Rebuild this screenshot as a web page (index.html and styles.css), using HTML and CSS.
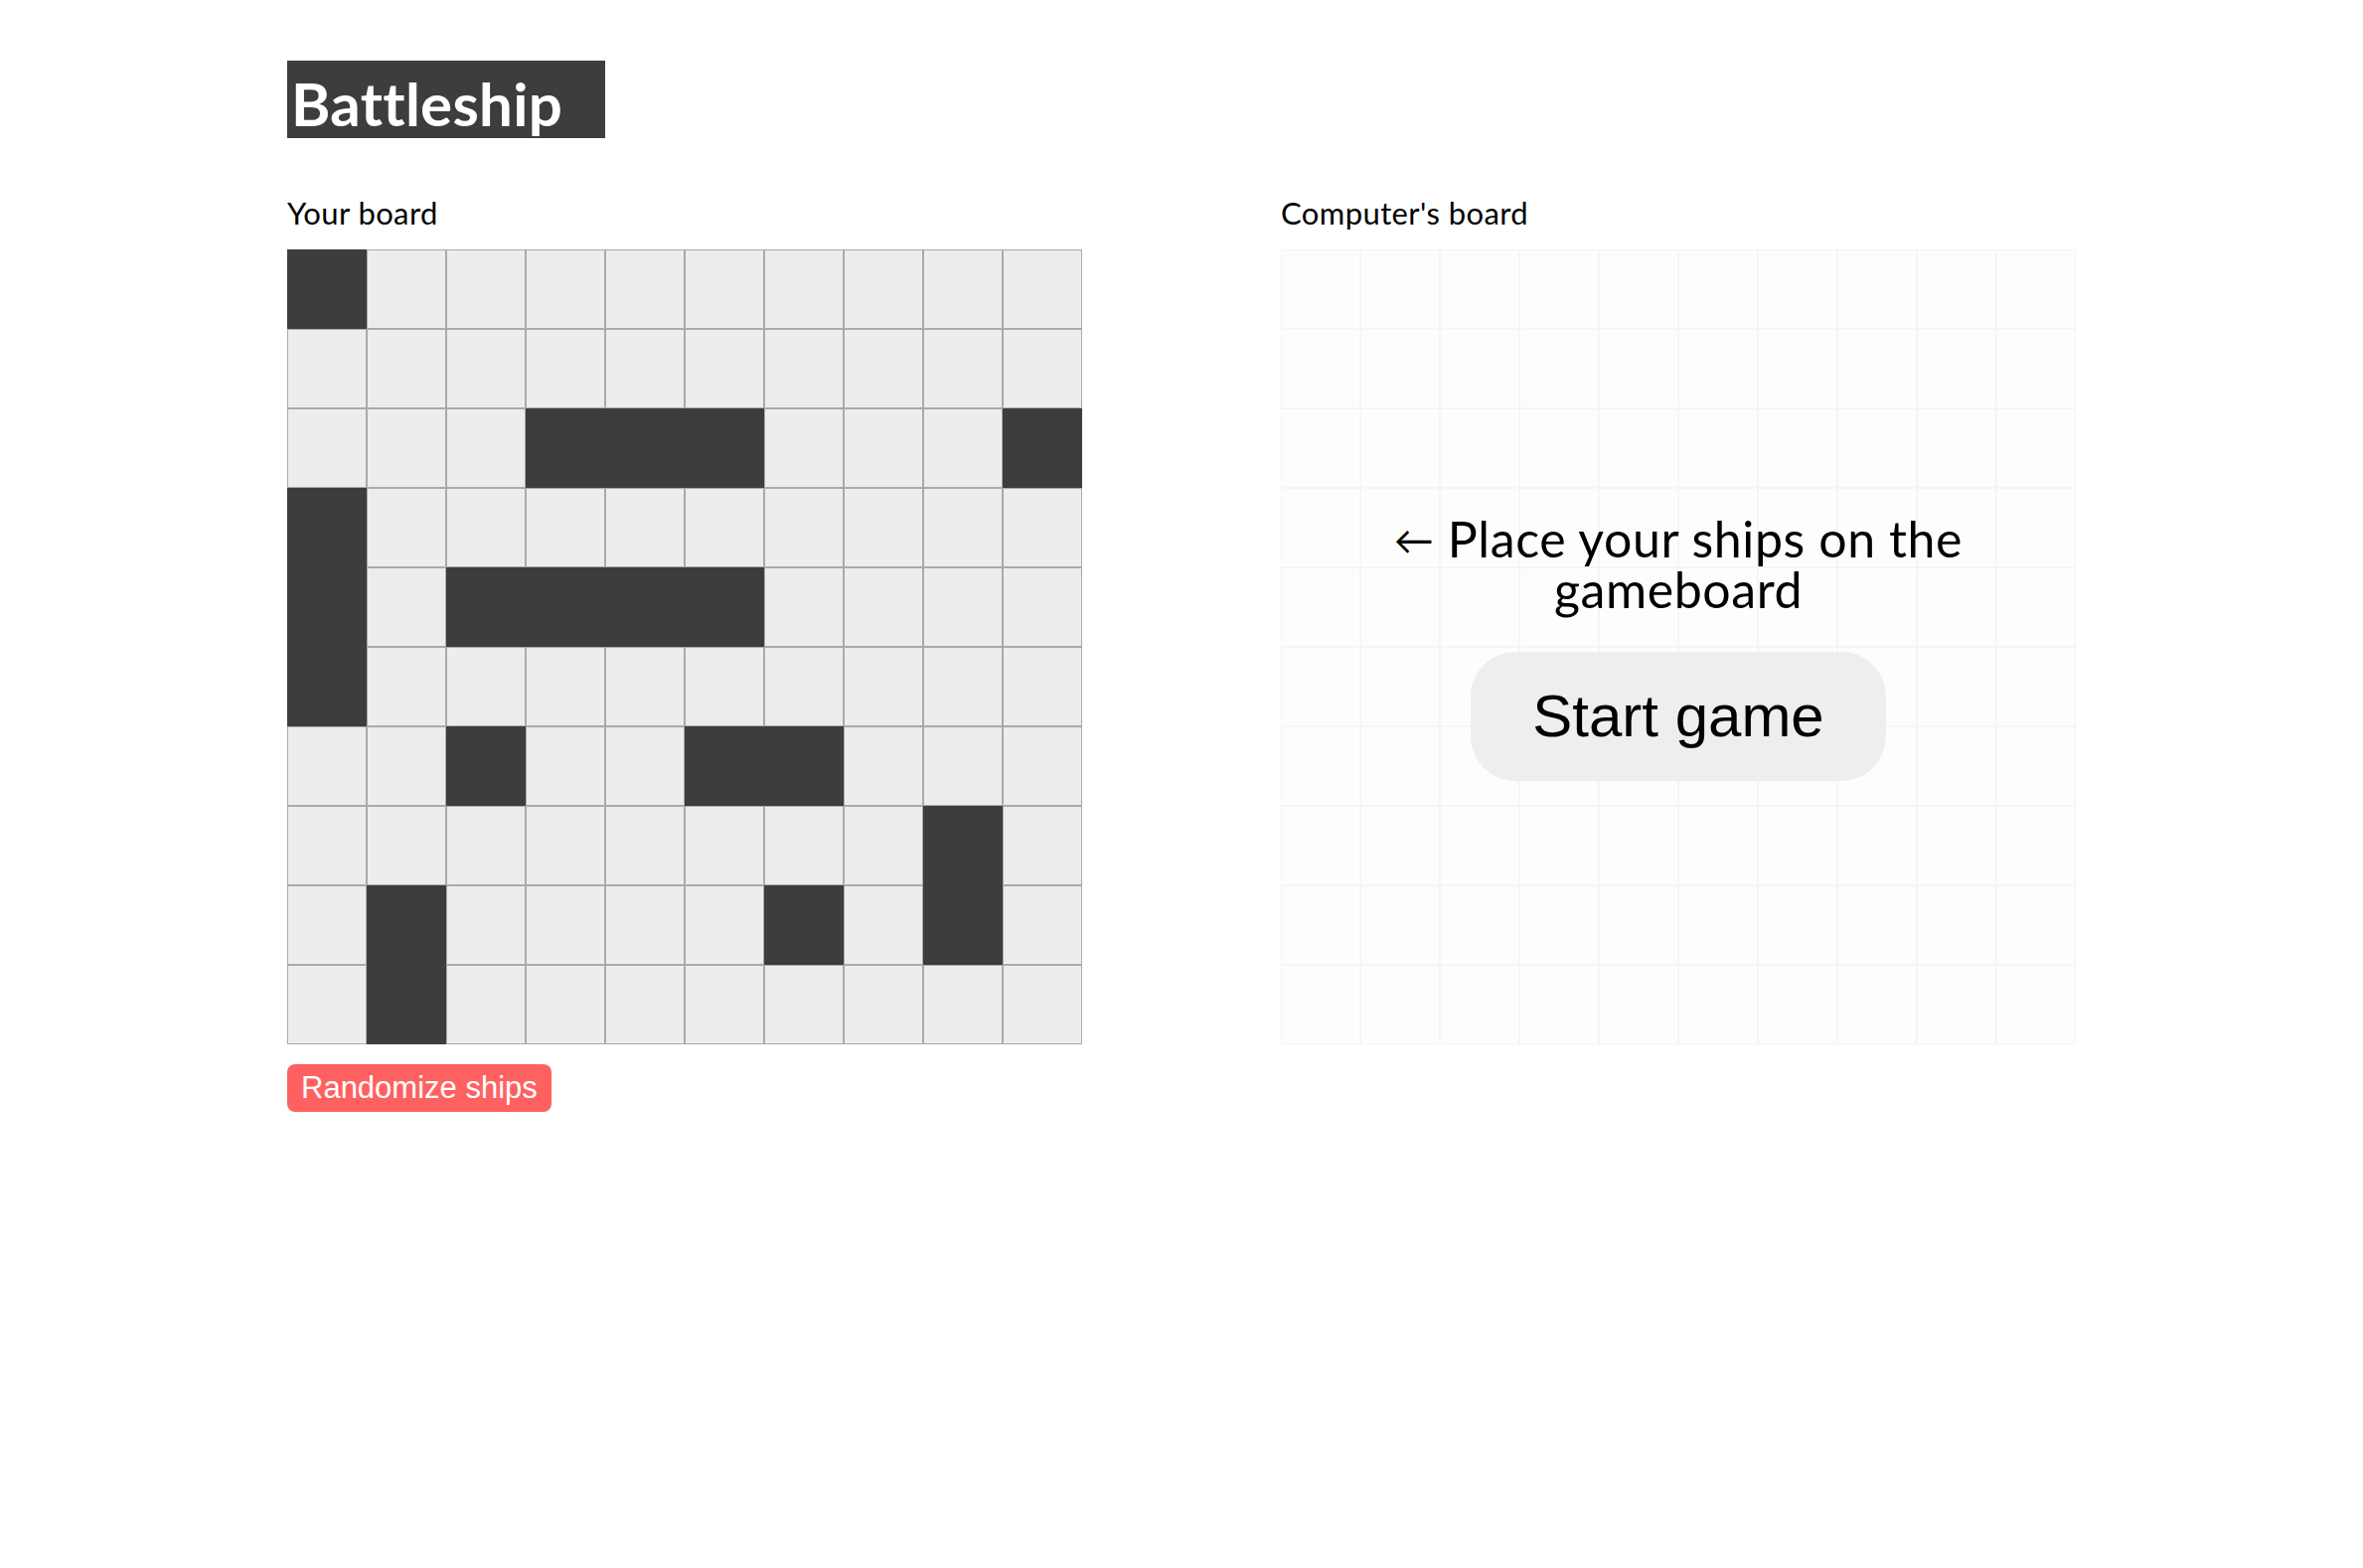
FILE: index.html
```html
<!DOCTYPE html>
<html lang="en">
<head>
<meta charset="utf-8">
<title>Battleship</title>
<link rel="stylesheet" href="styles.css">
</head>
<body>
<main class="page">
  <h1 class="title">Battleship</h1>
  <section class="boards">
    <div class="board-col">
      <h2 class="label">Your board</h2>
      <div class="grid">
        <div class="cell ship"></div><div class="cell"></div><div class="cell"></div><div class="cell"></div><div class="cell"></div><div class="cell"></div><div class="cell"></div><div class="cell"></div><div class="cell"></div><div class="cell"></div>
        <div class="cell"></div><div class="cell"></div><div class="cell"></div><div class="cell"></div><div class="cell"></div><div class="cell"></div><div class="cell"></div><div class="cell"></div><div class="cell"></div><div class="cell"></div>
        <div class="cell"></div><div class="cell"></div><div class="cell"></div><div class="cell ship"></div><div class="cell ship"></div><div class="cell ship"></div><div class="cell"></div><div class="cell"></div><div class="cell"></div><div class="cell ship"></div>
        <div class="cell ship"></div><div class="cell"></div><div class="cell"></div><div class="cell"></div><div class="cell"></div><div class="cell"></div><div class="cell"></div><div class="cell"></div><div class="cell"></div><div class="cell"></div>
        <div class="cell ship"></div><div class="cell"></div><div class="cell ship"></div><div class="cell ship"></div><div class="cell ship"></div><div class="cell ship"></div><div class="cell"></div><div class="cell"></div><div class="cell"></div><div class="cell"></div>
        <div class="cell ship"></div><div class="cell"></div><div class="cell"></div><div class="cell"></div><div class="cell"></div><div class="cell"></div><div class="cell"></div><div class="cell"></div><div class="cell"></div><div class="cell"></div>
        <div class="cell"></div><div class="cell"></div><div class="cell ship"></div><div class="cell"></div><div class="cell"></div><div class="cell ship"></div><div class="cell ship"></div><div class="cell"></div><div class="cell"></div><div class="cell"></div>
        <div class="cell"></div><div class="cell"></div><div class="cell"></div><div class="cell"></div><div class="cell"></div><div class="cell"></div><div class="cell"></div><div class="cell"></div><div class="cell ship"></div><div class="cell"></div>
        <div class="cell"></div><div class="cell ship"></div><div class="cell"></div><div class="cell"></div><div class="cell"></div><div class="cell"></div><div class="cell ship"></div><div class="cell"></div><div class="cell ship"></div><div class="cell"></div>
        <div class="cell"></div><div class="cell ship"></div><div class="cell"></div><div class="cell"></div><div class="cell"></div><div class="cell"></div><div class="cell"></div><div class="cell"></div><div class="cell"></div><div class="cell"></div>
      </div>
      <button class="randomize" type="button">Randomize ships</button>
    </div>
    <div class="board-col">
      <h2 class="label">Computer's board</h2>
      <div class="board-wrap">
        <div class="grid enemy">
          <div class="cell"></div><div class="cell"></div><div class="cell"></div><div class="cell"></div><div class="cell"></div><div class="cell"></div><div class="cell"></div><div class="cell"></div><div class="cell"></div><div class="cell"></div>
          <div class="cell"></div><div class="cell"></div><div class="cell"></div><div class="cell"></div><div class="cell"></div><div class="cell"></div><div class="cell"></div><div class="cell"></div><div class="cell"></div><div class="cell"></div>
          <div class="cell"></div><div class="cell"></div><div class="cell"></div><div class="cell"></div><div class="cell"></div><div class="cell"></div><div class="cell"></div><div class="cell"></div><div class="cell"></div><div class="cell"></div>
          <div class="cell"></div><div class="cell"></div><div class="cell"></div><div class="cell"></div><div class="cell"></div><div class="cell"></div><div class="cell"></div><div class="cell"></div><div class="cell"></div><div class="cell"></div>
          <div class="cell"></div><div class="cell"></div><div class="cell"></div><div class="cell"></div><div class="cell"></div><div class="cell"></div><div class="cell"></div><div class="cell"></div><div class="cell"></div><div class="cell"></div>
          <div class="cell"></div><div class="cell"></div><div class="cell"></div><div class="cell"></div><div class="cell"></div><div class="cell"></div><div class="cell"></div><div class="cell"></div><div class="cell"></div><div class="cell"></div>
          <div class="cell"></div><div class="cell"></div><div class="cell"></div><div class="cell"></div><div class="cell"></div><div class="cell"></div><div class="cell"></div><div class="cell"></div><div class="cell"></div><div class="cell"></div>
          <div class="cell"></div><div class="cell"></div><div class="cell"></div><div class="cell"></div><div class="cell"></div><div class="cell"></div><div class="cell"></div><div class="cell"></div><div class="cell"></div><div class="cell"></div>
          <div class="cell"></div><div class="cell"></div><div class="cell"></div><div class="cell"></div><div class="cell"></div><div class="cell"></div><div class="cell"></div><div class="cell"></div><div class="cell"></div><div class="cell"></div>
          <div class="cell"></div><div class="cell"></div><div class="cell"></div><div class="cell"></div><div class="cell"></div><div class="cell"></div><div class="cell"></div><div class="cell"></div><div class="cell"></div><div class="cell"></div>
        </div>
        <div class="overlay">
          <p class="prompt"><span class="arrow">←</span> Place your ships on the<br>gameboard</p>
          <button class="start" type="button">Start game</button>
        </div>
      </div>
    </div>
  </section>
</main>
</body>
</html>
```
FILE: styles.css
```css
html, body {
  margin: 0;
  padding: 0;
  background: #ffffff;
}

body {
  font-family: "Trebuchet MS", Lato, "Open Sans", sans-serif;
  color: #000000;
}

.page {
  width: 1800px;
  margin: 0 auto;
  padding-top: 61px;
}

.title {
  box-sizing: border-box;
  width: 320px;
  height: 78px;
  margin: 0;
  padding: 8px 0 0 4px;
  background: #3d3d3d;
  color: #ffffff;
  font-size: 60px;
  font-weight: bold;
  line-height: 70px;
  letter-spacing: 0.3px;
}

.boards {
  display: flex;
  gap: 200px;
  margin-top: 57px;
}

.board-col {
  display: flex;
  flex-direction: column;
  align-items: flex-start;
  width: 800px;
}

.label {
  margin: 0 0 19px 0;
  font-size: 31px;
  font-weight: normal;
  line-height: 36px;
  letter-spacing: 0.4px;
}

.grid {
  display: grid;
  grid-template-columns: repeat(10, 80px);
  grid-auto-rows: 80px;
  width: 800px;
}

.cell {
  box-sizing: border-box;
  border: 1px solid #aaaaaa;
  background: #ededed;
}

.cell.ship {
  background: #3d3d3d;
  border-color: #3d3d3d;
}

.enemy .cell {
  background: #fdfdfd;
  border-color: #f5f5f5;
}

.board-wrap {
  position: relative;
  width: 800px;
  height: 800px;
}

.overlay {
  position: absolute;
  inset: 0;
  display: flex;
  flex-direction: column;
  align-items: center;
  justify-content: center;
}

.prompt {
  margin: 0 0 38px 0;
  font-size: 50px;
  line-height: 50px;
  letter-spacing: 0.6px;
  text-align: center;
}

.arrow {
  display: inline-block;
  font-size: 40px;
  vertical-align: 3px;
}

.start {
  border: none;
  border-radius: 45px;
  background: #eeeeee;
  color: #000000;
  font-family: "Liberation Sans", Arial, sans-serif;
  font-size: 60px;
  line-height: 70px;
  padding: 30px 62px;
  cursor: pointer;
}

.randomize {
  margin-top: 20px;
  border: none;
  border-radius: 8px;
  background: #ff6161;
  color: #ffffff;
  font-family: "Liberation Sans", Arial, sans-serif;
  font-size: 31px;
  line-height: 36px;
  padding: 6px 14px;
  cursor: pointer;
}
```
